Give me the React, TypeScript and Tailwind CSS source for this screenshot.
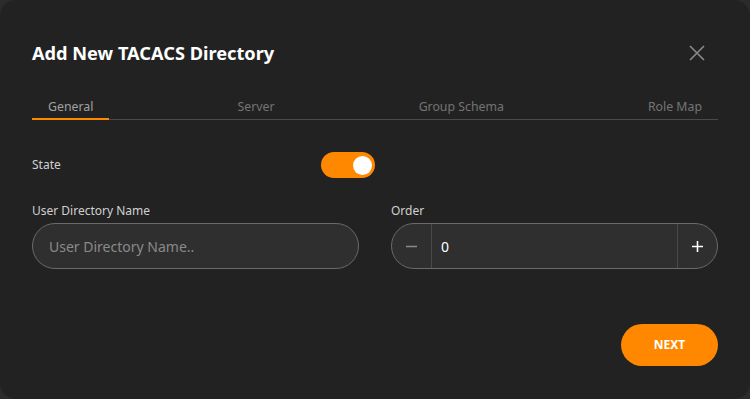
import { useState } from 'react';

const tabs = ['General', 'Server', 'Group Schema', 'Role Map'];

export default function App() {
  const [active, setActive] = useState(0);
  const [enabled, setEnabled] = useState(true);
  const [order, setOrder] = useState(0);

  return (
    <div className="w-[750px] h-[399px] bg-[#2b2b2b] font-['Noto_Sans',sans-serif]">
      <div className="w-full h-full bg-[#222222] rounded-2xl px-8 pt-[41px] flex flex-col">
        <div className="flex items-center justify-between">
          <h2 className="text-[18.2px] font-bold text-white leading-6">Add New TACACS Directory</h2>
          <button className="w-6 h-6 flex items-center justify-center text-[#8a8a8a] mr-[9px]">
            <svg width="16" height="16" viewBox="0 0 16 16" fill="none" stroke="currentColor" strokeWidth="1.6">
              <path d="M1 1L15 15M15 1L1 15" />
            </svg>
          </button>
        </div>

        <div className="mt-[31px] flex justify-between border-b border-[#4a4a4a]">
          {tabs.map((tab, i) => (
            <button
              key={tab}
              onClick={() => setActive(i)}
              className={
                i === active
                  ? 'px-4 pt-[2px] pb-[2px] text-[12.3px] leading-[18px] text-[#a0a0a0] border-b-2 border-[#ff8800] -mb-px'
                  : 'px-4 pt-[2px] pb-[2px] text-[12.3px] leading-[18px] text-[#747474] border-b-2 border-transparent -mb-px'
              }
            >
              {tab}
            </button>
          ))}
        </div>

        <div className="mt-[32px] flex items-center justify-between w-[343px]">
          <span className="text-[12px] text-[#d0d0d0]">State</span>
          <button
            onClick={() => setEnabled(!enabled)}
            className={
              enabled
                ? 'w-[54px] h-[26px] rounded-full bg-[#ff8800] flex items-center justify-end px-[3px]'
                : 'w-[54px] h-[26px] rounded-full bg-[#555555] flex items-center justify-start px-[3px]'
            }
          >
            <span className="w-[19px] h-[19px] rounded-full bg-white" />
          </button>
        </div>

        <div className="mt-[24px] grid grid-cols-2 gap-8">
          <div className="flex flex-col">
            <label className="text-[12px] text-[#d0d0d0] leading-[18px] mb-[3px]">User Directory Name</label>
            <input
              placeholder="User Directory Name.."
              className="h-[46px] rounded-full border border-[#6a6a6a] bg-[#2f2f2f] px-4 text-[14px] text-white placeholder:text-[#8a8a8a] outline-none"
            />
          </div>
          <div className="flex flex-col">
            <label className="text-[12px] text-[#d0d0d0] leading-[18px] mb-[3px]">Order</label>
            <div className="h-[46px] rounded-full border border-[#6a6a6a] bg-[#2f2f2f] flex overflow-hidden">
              <button
                onClick={() => setOrder(order - 1)}
                className="w-[40px] flex items-center justify-center border-r border-[#4a4a4a] text-[#8a8a8a]"
              >
                <svg width="11" height="11" viewBox="0 0 11 11" stroke="currentColor" strokeWidth="1.6">
                  <path d="M0 5.5H11" />
                </svg>
              </button>
              <input
                value={order}
                onChange={(e) => setOrder(Number(e.target.value) || 0)}
                className="flex-1 min-w-0 bg-transparent px-[9px] text-[14px] text-white outline-none"
              />
              <button
                onClick={() => setOrder(order + 1)}
                className="w-[40px] flex items-center justify-center border-l border-[#4a4a4a] text-white"
              >
                <svg width="11" height="11" viewBox="0 0 11 11" stroke="currentColor" strokeWidth="1.6">
                  <path d="M0 5.5H11M5.5 0V11" />
                </svg>
              </button>
            </div>
          </div>
        </div>

        <div className="mt-[55px] flex justify-end">
          <button className="w-[97px] h-[42px] rounded-full bg-[#ff8800] text-white text-[12px] font-bold">
            NEXT
          </button>
        </div>
      </div>
    </div>
  );
}
